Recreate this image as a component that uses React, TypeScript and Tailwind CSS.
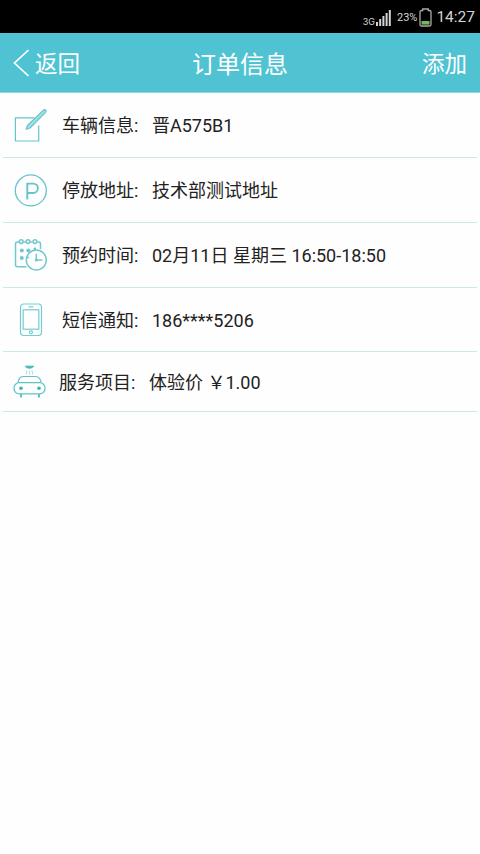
import type { ReactNode } from "react";

function EditIcon() {
  return (
    <svg width="34" height="34" viewBox="0 0 34 34" fill="none" stroke="#62c5cb" strokeWidth="1.2">
      <path d="M25.7 17.5V33H2.4V9.8H21.5" />
      <path d="M14.2 17.8L30 2.6Q31.5 1.2 32.6 2Q33.6 3.2 32.1 4.8L17 20L13.2 21.3Z" fill="#a5e0e2" strokeLinejoin="round" />
    </svg>
  );
}

function ParkingIcon() {
  return (
    <svg width="34" height="34" viewBox="0 0 34 34" fill="none" stroke="#62c5cb">
      <circle cx="17.8" cy="17.4" r="15.5" strokeWidth="1.3" />
      <path d="M14.3 26.6V10.6H20.2a4.7 4.7 0 0 1 0 9.4H14.3" strokeWidth="1.9" />
    </svg>
  );
}

function CalendarIcon() {
  return (
    <svg width="35" height="34" viewBox="0 0 35 34" fill="none" stroke="#70c8cc" strokeWidth="1.5">
      <path d="M6 4H4.4Q2.5 4 2.5 6V26.7Q2.5 28.7 4.5 28.7H13.5M10.5 4H12.5M17.5 4H19.5M24.5 4H25.7Q27.5 4 27.5 6V11" />
      <circle cx="8.2" cy="3.6" r="1.9" />
      <circle cx="15" cy="3.6" r="1.9" />
      <circle cx="22" cy="3.6" r="1.9" />
      <g fill="#70c8cc" stroke="none">
        <circle cx="8.8" cy="12.5" r="2" />
        <circle cx="15.3" cy="12.5" r="2" />
        <circle cx="21.8" cy="10.8" r="1.4" />
        <circle cx="8.8" cy="20" r="2" />
        <circle cx="15" cy="19.4" r="1" />
      </g>
      <circle cx="23.3" cy="22" r="10" />
      <path d="M23.3 15.7V22H29.3" />
      <circle cx="23.3" cy="22" r="1.6" fill="#70c8cc" stroke="none" />
    </svg>
  );
}

function PhoneIcon() {
  return (
    <svg width="34" height="34" viewBox="0 0 34 34" fill="none" stroke="#74cdd0" strokeWidth="1.2">
      <rect x="7.5" y="1" width="21" height="31.5" rx="3" />
      <rect x="10.2" y="6.8" width="15.6" height="19.4" />
      <path d="M15.7 3.8H20.3" />
      <circle cx="18" cy="29.3" r="1.5" />
    </svg>
  );
}

function CarWashIcon() {
  return (
    <svg width="34" height="34" viewBox="0 0 34 34" fill="none" stroke="#5fc3c2" strokeWidth="1.2">
      <path d="M12 1H21Q20 3.4 16.5 3.4T12 1Z" fill="#45b5b4" strokeWidth=".7" />
      <path d="M14 5.5L13.3 9.5M16.6 5.5V9.5M19 5.5L19.7 9.5" strokeWidth=".8" opacity=".7" />
      <path d="M5 17.5Q6 11.7 10 11.5H23Q26.8 11.7 28.3 17.5" />
      <rect x="1" y="17.7" width="31" height="11.2" rx="5.3" />
      <path d="M8 29V32.5M26 29V32.5" strokeWidth="2" />
      <circle cx="8" cy="23.2" r="1.8" fill="#3bb5b2" stroke="none" />
      <circle cx="26" cy="23.2" r="1.8" fill="#3bb5b2" stroke="none" />
    </svg>
  );
}

function StatusBar() {
  return (
    <div className="flex h-[33px] items-center justify-end bg-black pr-[5px] pt-[2px] text-[#d5d5d5]">
      <span className="mr-px mt-[7px] font-[Inter] text-[9px] leading-none">3G</span>
      <svg className="mr-[6px]" width="15" height="16" viewBox="0 0 15 16" fill="#d5d5d5">
        <rect x="0" y="12" width="2" height="4" />
        <rect x="3.2" y="9" width="2" height="7" />
        <rect x="6.4" y="6" width="2" height="10" />
        <rect x="9.6" y="3" width="2" height="13" />
        <rect x="12.8" y="0" width="2" height="16" />
      </svg>
      <span className="mr-[2px] text-[11px] leading-none">23%</span>
      <svg className="mr-[4px]" width="13" height="19" viewBox="0 0 13 19" fill="none">
        <path d="M3.7 2.5V1H9.3V2.5H10.5Q12 2.5 12 4V16.5Q12 18 10.5 18H2.5Q1 18 1 16.5V4Q1 2.5 2.5 2.5Z" stroke="#aaa" strokeWidth="1.3" />
        <rect x="2.5" y="13" width="8" height="3.6" fill="#73b75a" />
      </svg>
      <span className="text-[15.5px] leading-none">14:27</span>
    </div>
  );
}

type RowProps = {
  icon: ReactNode;
  label: string;
  value: string;
};

const rows: RowProps[] = [
  { icon: <EditIcon />, label: "车辆信息:", value: "晋A575B1" },
  { icon: <ParkingIcon />, label: "停放地址:", value: "技术部测试地址" },
  { icon: <CalendarIcon />, label: "预约时间:", value: "02月11日 星期三 16:50-18:50" },
  { icon: <PhoneIcon />, label: "短信通知:", value: "186****5206" },
];

function Row({ icon, label, value }: RowProps) {
  return (
    <li className="flex h-[65px] items-center border-b border-[#cbe8eb] pl-[10px] last:h-[64px]">
      <span className="w-[49px]">{icon}</span>
      <span className="w-[90px] pt-[2px]">{label}</span>
      <span className="pt-[2px]">{value}</span>
    </li>
  );
}

export default function App() {
  return (
    <div className="min-h-[854px] w-[480px] bg-[#fefefe] font-[Roboto,'Noto_Sans_CJK_SC',sans-serif] text-[#222]">
      <StatusBar />

      <header className="grid h-[60px] grid-cols-3 items-center border-b border-[#8fd8e2] bg-[#50c3d3] text-[22.5px] text-white">
        <button className="flex items-center pl-[13px]">
          <svg className="mr-[5px]" width="17" height="28" viewBox="0 0 17 28" fill="none" stroke="white" strokeWidth="1.7">
            <path d="M15.5 1L1.5 14L15.5 27" />
          </svg>
          <span className="pt-[4px]">返回</span>
        </button>
        <h1 className="pt-[5px] text-center text-[24px]">订单信息</h1>
        <button className="pr-[13px] pt-[4px] text-right">添加</button>
      </header>

      <div className="px-[3px] text-[18px] leading-none whitespace-nowrap">
        <ul>
          {rows.map((row) => (
            <Row key={row.label} {...row} />
          ))}
        </ul>
        <div className="flex h-[60px] items-center border-b border-[#cbe8eb] pl-[10px]">
          <CarWashIcon />
          <span className="ml-[12px] w-[90px] pt-[3px]">服务项目:</span>
          <span className="pt-[3px]">体验价 ￥1.00</span>
        </div>
      </div>
    </div>
  );
}
